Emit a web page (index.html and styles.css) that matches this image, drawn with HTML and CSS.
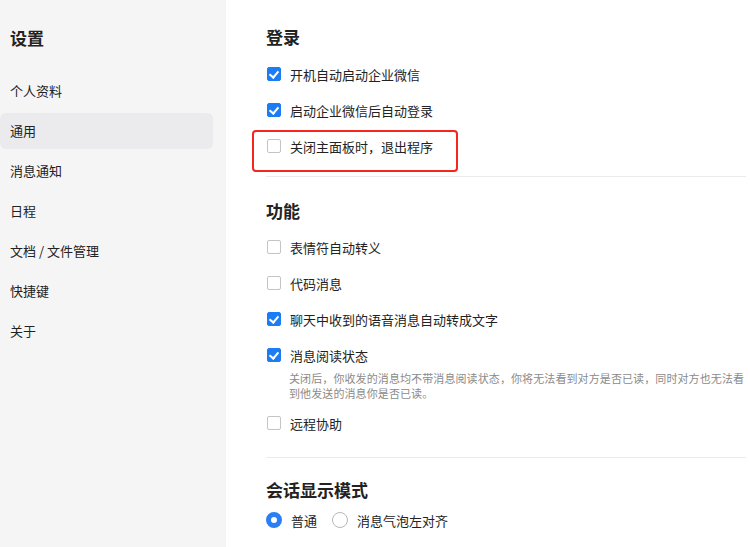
FILE: index.html
```html
<!DOCTYPE html>
<html lang="zh-CN">
<head>
    <meta charset="UTF-8">
    <title>设置</title>
    <link rel="stylesheet" href="styles.css">
</head>
<body>
    <div class="sidebar">
        <h1 class="side-title">设置</h1>
        <ul class="nav">
            <li class="nav-item">个人资料</li>
            <li class="nav-item active">通用</li>
            <li class="nav-item">消息通知</li>
            <li class="nav-item">日程</li>
            <li class="nav-item">文档 / 文件管理</li>
            <li class="nav-item">快捷键</li>
            <li class="nav-item">关于</li>
        </ul>
    </div>

    <div class="main">
        <!-- 登录 -->
        <div class="section">
            <h2 class="section-title">登录</h2>
            <label class="row"><span class="check on"></span>开机自动启动企业微信</label>
            <label class="row"><span class="check on"></span>启动企业微信后自动登录</label>
            <label class="row marked"><span class="check"></span>关闭主面板时，退出程序</label>
        </div>

        <!-- 功能 -->
        <div class="section section-func">
            <h2 class="section-title">功能</h2>
            <label class="row"><span class="check"></span>表情符自动转义</label>
            <label class="row"><span class="check"></span>代码消息</label>
            <label class="row"><span class="check on"></span>聊天中收到的语音消息自动转成文字</label>
            <label class="row"><span class="check on"></span>消息阅读状态</label>
            <p class="desc">关闭后，你收发的消息均不带消息阅读状态，你将无法看到对方是否已读，同时对方也无法看到他发送的消息你是否已读。</p>
            <label class="row row-after-desc"><span class="check"></span>远程协助</label>
        </div>

        <!-- 会话显示模式 -->
        <div class="section section-last">
            <h2 class="section-title">会话显示模式</h2>
            <div class="radio-group">
                <label class="radio-opt"><span class="radio on"></span>普通</label>
                <label class="radio-opt"><span class="radio"></span>消息气泡左对齐</label>
            </div>
        </div>
    </div>
</body>
</html>
```

FILE: styles.css
```css
* { margin: 0; padding: 0; box-sizing: border-box; }
body { font-family: "Noto Sans CJK SC", "Noto Sans", sans-serif; color: #222; background: #fff; display: flex; min-height: 100vh; font-size: 13px; }

/* 左侧栏 */
.sidebar { width: 226px; flex-shrink: 0; background: #f5f5f5; padding: 26px 13px 0 0; }
.side-title { font-size: 17px; font-weight: bold; line-height: 24px; padding-left: 10px; margin-bottom: 23px; }
.nav { list-style: none; }
.nav-item { height: 36px; line-height: 36px; padding-left: 10px; margin-bottom: 4px; border-radius: 6px; }
.nav-item.active { background: #ebebed; }

/* 右侧内容 */
.main { flex: 1; padding: 25px 0 0 40px; }
.section { border-bottom: 1px solid #ebebeb; padding-bottom: 12px; margin-right: 4px; }
.section-func { padding-top: 22px; padding-bottom: 16px; margin-right: 4px; }
.section-last { border-bottom: none; padding-top: 20px; }
.section-title { font-size: 17px; font-weight: bold; line-height: 24px; margin-bottom: 7px; }
.section-func .section-title { margin-bottom: 6px; }
.section-last .section-title { margin-bottom: 0; }

.row { display: flex; align-items: center; height: 36px; position: relative; }
.row-after-desc { margin-top: 4px; }
.check { width: 14px; height: 14px; border: 1px solid #c4c4c4; border-radius: 2px; background: #fff; margin: 0 9px 0 1px; position: relative; }
.check.on { background: #1b7cf4; border-color: #1b7cf4; }
.check.on::after { content: ""; position: absolute; left: 3px; top: 1px; width: 4px; height: 7px; border: solid #fff; border-width: 0 2px 2px 0; transform: rotate(40deg); }

/* 红色标注框 */
.row.marked::before { content: ""; position: absolute; left: -14px; top: 2px; width: 202px; height: 38px; border: 2px solid #f5261f; border-radius: 4px; }

.desc { font-size: 11px; letter-spacing: 0.1px; line-height: 15px; color: #8a8a8a; padding-left: 23px; margin-top: -2px; }

.radio-group { display: flex; align-items: center; height: 36px; gap: 15px; }
.radio-opt { display: flex; align-items: center; }
.radio { width: 16px; height: 16px; border: 1px solid #b8b8b8; border-radius: 50%; margin-right: 9px; background: #fff; }
.radio.on { border: 5px solid #2a7ff3; }
```
